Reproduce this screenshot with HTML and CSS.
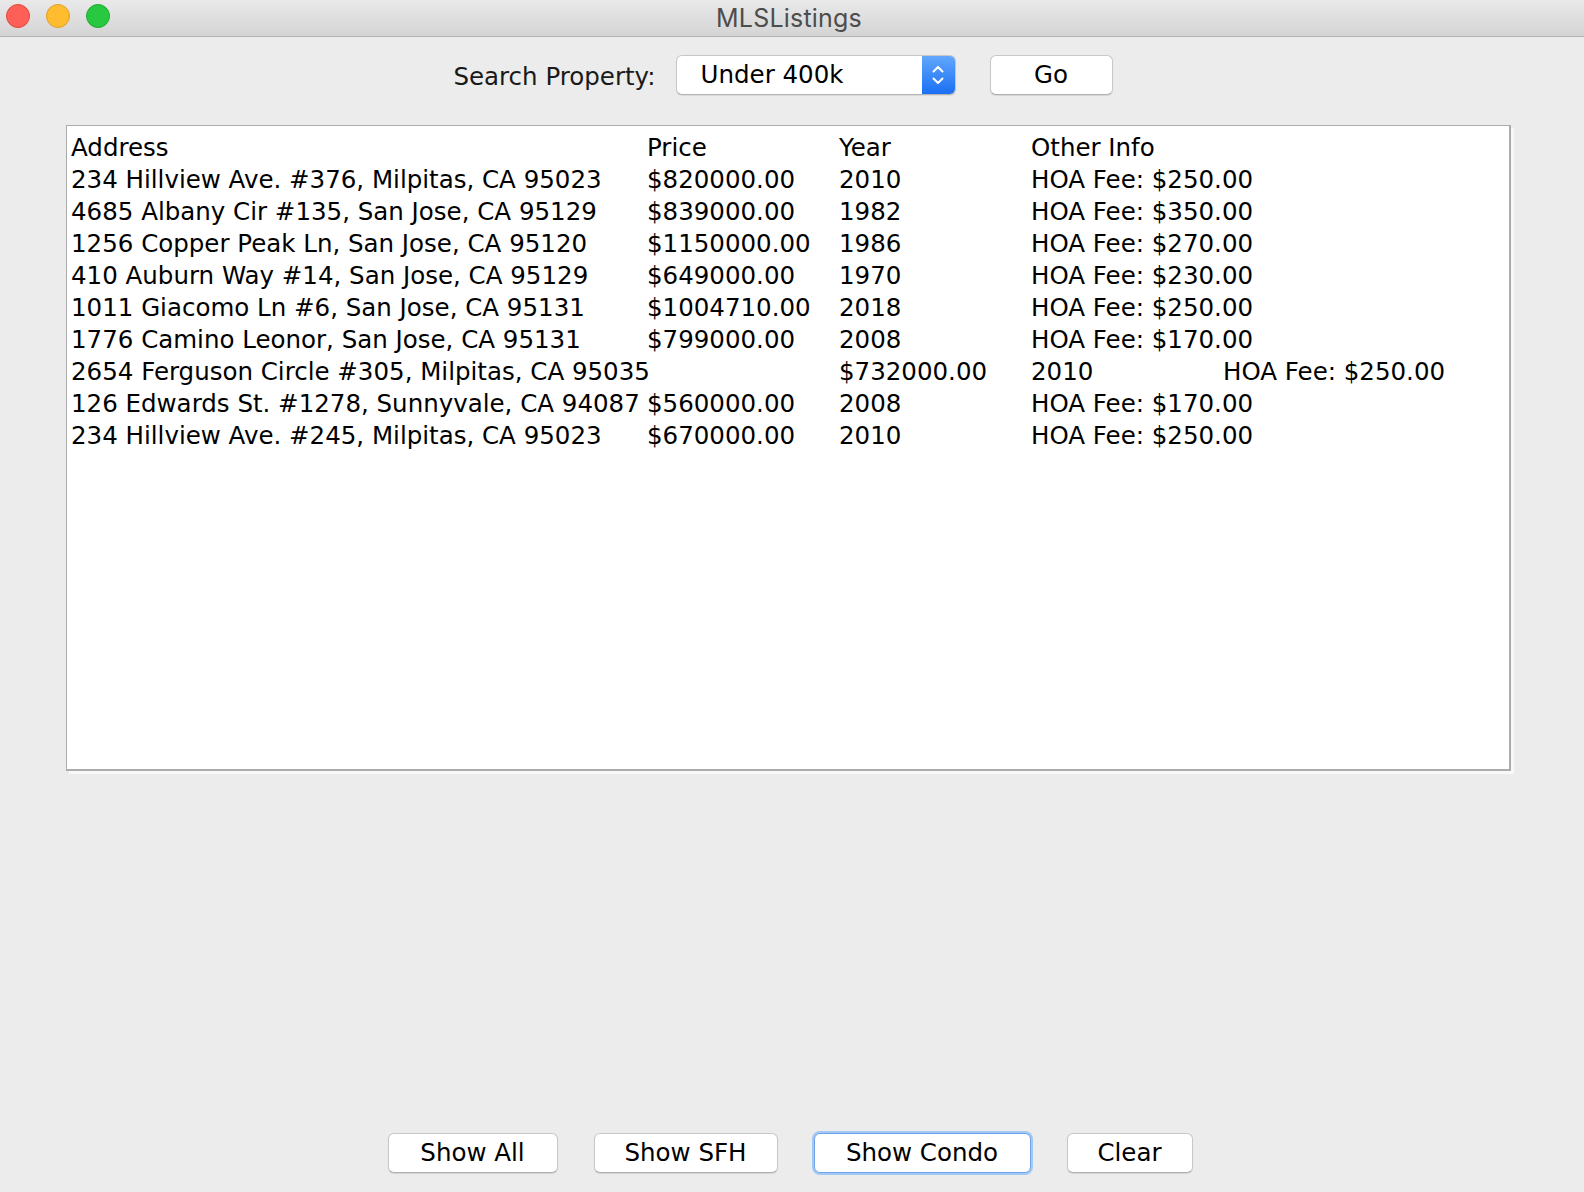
FILE: index.html
```html
<!DOCTYPE html>
<html lang="en">
<head>
<meta charset="utf-8">
<title>MLSListings</title>
<link rel="stylesheet" href="styles.css">
</head>
<body>
<div class="window">
  <header class="titlebar">
    <div class="lights">
      <span class="light light-close"></span>
      <span class="light light-min"></span>
      <span class="light light-max"></span>
    </div>
    <div class="title">MLSListings</div>
    <div></div>
  </header>

  <div class="search">
    <span class="search-label">Search Property:</span>
    <div class="combo">
      <span class="combo-value">Under 400k</span>
      <span class="combo-arrows">
        <svg width="14" height="24" viewBox="0 0 14 24" aria-hidden="true">
          <path d="M2.5 8.5 L7 4 L11.5 8.5" fill="none" stroke="#fff" stroke-width="2" stroke-linecap="round" stroke-linejoin="round"/>
          <path d="M2.5 15.5 L7 20 L11.5 15.5" fill="none" stroke="#fff" stroke-width="2" stroke-linecap="round" stroke-linejoin="round"/>
        </svg>
      </span>
    </div>
    <button class="btn btn-go">Go</button>
  </div>

  <pre class="listing">Address&#9;&#9;&#9;Price&#9;Year&#9;Other Info
234 Hillview Ave. #376, Milpitas, CA 95023&#9;$820000.00&#9;2010&#9;HOA Fee: $250.00
4685 Albany Cir #135, San Jose, CA 95129&#9;$839000.00&#9;1982&#9;HOA Fee: $350.00
1256 Copper Peak Ln, San Jose, CA 95120&#9;$1150000.00&#9;1986&#9;HOA Fee: $270.00
410 Auburn Way #14, San Jose, CA 95129&#9;$649000.00&#9;1970&#9;HOA Fee: $230.00
1011 Giacomo Ln #6, San Jose, CA 95131&#9;$1004710.00&#9;2018&#9;HOA Fee: $250.00
1776 Camino Leonor, San Jose, CA 95131&#9;$799000.00&#9;2008&#9;HOA Fee: $170.00
2654 Ferguson Circle #305, Milpitas, CA 95035&#9;$732000.00&#9;2010&#9;HOA Fee: $250.00
126 Edwards St. #1278, Sunnyvale, CA 94087&#9;$560000.00&#9;2008&#9;HOA Fee: $170.00
234 Hillview Ave. #245, Milpitas, CA 95023&#9;$670000.00&#9;2010&#9;HOA Fee: $250.00</pre>

  <div class="spacer"></div>

  <div class="actions">
    <button class="btn btn-all">Show All</button>
    <button class="btn btn-sfh">Show SFH</button>
    <button class="btn btn-condo btn-focus">Show Condo</button>
    <button class="btn btn-clear">Clear</button>
  </div>
</div>
</body>
</html>
```

FILE: styles.css
```css
html, body {
  margin: 0;
  padding: 0;
}

body {
  background: #ececec;
  font-family: "DejaVu Sans", "Liberation Sans", sans-serif;
  color: #000;
  overflow: hidden;
}

.window {
  height: 1192px;
  display: flex;
  flex-direction: column;
}

/* Title bar */
.titlebar {
  height: 36px;
  flex: 0 0 auto;
  border-bottom: 1px solid #b2b2b2;
  background: linear-gradient(#e9e9e9, #d4d4d4);
  display: grid;
  grid-template-columns: 1fr auto 1fr;
  align-items: center;
}

.lights {
  display: flex;
  gap: 16px;
  padding-left: 6px;
  align-self: start;
  padding-top: 4px;
}

.light {
  width: 24px;
  height: 24px;
  border-radius: 50%;
  box-sizing: border-box;
}

.light-close { background: #fe5f57; border: 1px solid #e2463f; }
.light-min   { background: #febc2e; border: 1px solid #e0a028; }
.light-max   { background: #28c840; border: 1px solid #1eaa31; }

.title {
  font-family: "Inter", "Liberation Sans", sans-serif;
  font-size: 25px;
  color: #4d4d4d;
  letter-spacing: 0.2px;
  padding-right: 6px;
}

/* Search row */
.search {
  flex: 0 0 auto;
  margin-top: 17px;
  height: 41px;
  display: flex;
  align-items: center;
  justify-content: center;
  padding-right: 18px;
}

.search-label {
  font-size: 24.5px;
  color: #1a1a1a;
  margin-right: 20px;
  margin-top: 4px;
}

.combo {
  width: 280px;
  height: 40px;
  box-sizing: border-box;
  display: flex;
  background: #fff;
  border: 1px solid #c6c6c6;
  border-bottom-color: #b4b4b4;
  border-radius: 6px;
  box-shadow: 0 1px 1px rgba(0, 0, 0, 0.08);
  overflow: hidden;
}

.combo-value {
  flex: 1;
  font-size: 24.5px;
  line-height: 38px;
  padding-left: 24px;
}

.combo-arrows {
  width: 33px;
  display: flex;
  align-items: center;
  justify-content: center;
  background: linear-gradient(#62a7fd, #1a6ff4);
}

.combo-arrows svg {
  display: block;
}

.btn {
  height: 40px;
  box-sizing: border-box;
  padding: 0;
  margin: 0;
  background: #fff;
  border: 1px solid #c8c8c8;
  border-bottom-color: #b0b0b0;
  border-radius: 6px;
  box-shadow: 0 1px 1px rgba(0, 0, 0, 0.1);
  font-family: "DejaVu Sans", "Liberation Sans", sans-serif;
  font-size: 24.5px;
  color: #000;
  text-align: center;
  line-height: 38px;
}

.btn-go {
  width: 123px;
  margin-left: 34px;
}

/* Listing area */
.listing {
  flex: 0 0 auto;
  margin: 30px 0 0 66px;
  width: 1445px;
  height: 646px;
  box-sizing: border-box;
  background: #fff;
  border: 1px solid #acacac;
  border-right-width: 2px;
  border-bottom-width: 2px;
  box-shadow: 3px 3px 0 #f8f8f8;
  padding: 6px 4px;
  font-family: "DejaVu Sans", "Liberation Sans", sans-serif;
  font-size: 24.5px;
  line-height: 32px;
  white-space: pre;
  tab-size: 192px;
  -moz-tab-size: 192px;
  color: #000;
  overflow: hidden;
}

.spacer {
  flex: 1 1 auto;
}

/* Bottom buttons */
.actions {
  flex: 0 0 auto;
  display: flex;
  justify-content: center;
  gap: 36px;
  padding-bottom: 19px;
  padding-right: 4px;
}

.btn-all   { width: 170px; }
.btn-sfh   { width: 184px; }
.btn-condo { width: 217px; }
.btn-clear { width: 126px; }

.btn-focus {
  border-color: #6ea3ea;
  box-shadow: 0 0 0 2px #a4c8f4;
}
```
